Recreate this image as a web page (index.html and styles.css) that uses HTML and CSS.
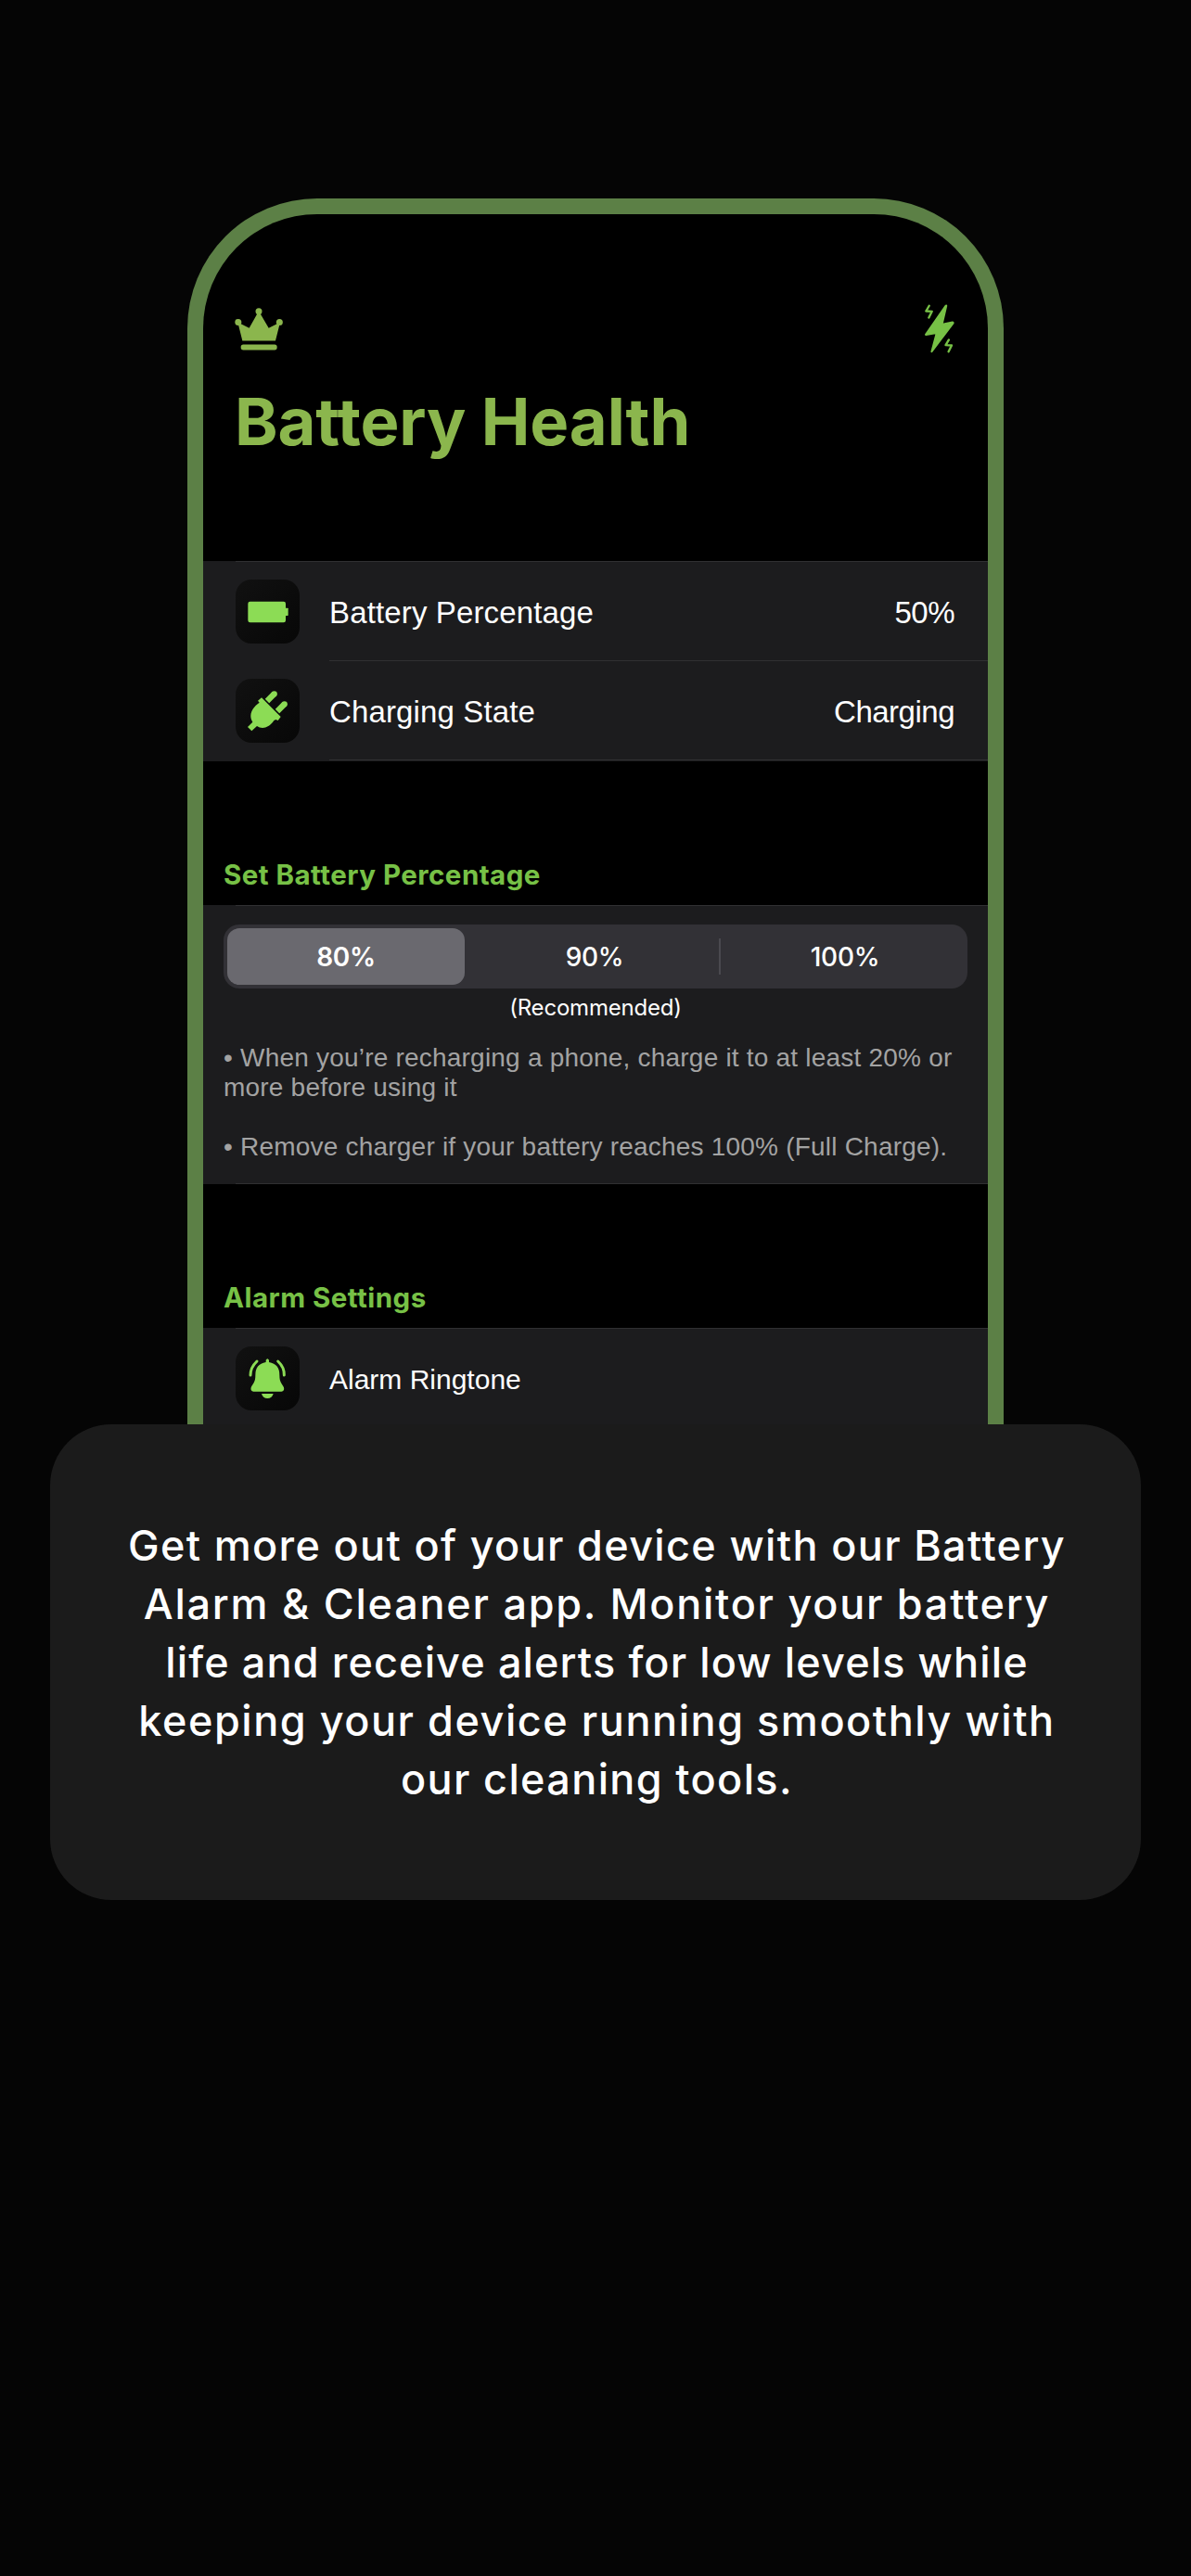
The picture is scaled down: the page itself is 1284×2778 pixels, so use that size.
FILE: index.html
```html
<!DOCTYPE html>
<html lang="en">
<head>
<meta charset="utf-8">
<title>Battery Alarm &amp; Cleaner</title>
<link rel="stylesheet" href="styles.css">
</head>
<body>
<main class="page">
  <section class="phone">
    <header class="topbar">
      <svg class="crown" viewBox="190 395 156 137" aria-hidden="true">
        <circle cx="268" cy="406" r="10.500"/><circle cx="201.500" cy="441" r="10.500"/><circle cx="335" cy="441" r="10.500"/>
        <path d="M264 412h8l28 48 30-15 5 4-13 52H215l-13-52 5-4 30 15z"/>
        <rect x="210" y="513" width="117" height="18" rx="8"/>
      </svg>
      <svg class="bolt" viewBox="1070 385 98 157" aria-hidden="true">
        <path class="solid" d="M1140 390l-64 92q0 1 1 1l34-6-16 60 69-92q0-2-2-2l-34 7 14-60q0-2-2 0z"/>
        <path class="spark" d="M1087 390l-10 17 19 1-10 20M1150 499l-10 17 19 1-10 20"/>
      </svg>
    </header>
    <h1 class="title">Battery Health</h1>

    <div class="group status">
      <div class="line line-wide"></div>
      <div class="row">
        <svg class="tile" viewBox="161 102 207 207" aria-hidden="true">
          <rect x="201" y="173" width="122" height="68" rx="7"/><rect x="318" y="194" width="13" height="25" rx="2"/>
        </svg>
        <span class="label">Battery Percentage</span>
        <span class="value">50%</span>
      </div>
      <div class="line"></div>
      <div class="row">
        <svg class="tile" viewBox="161 426 207 207" aria-hidden="true">
          <path d="M245 487L307 549L298 561L291 558L285 561C268 586 246 590 230 579L213 595L200 582L216 566C203 545 211 522 238 503L233 497Z"/>
          <path class="prong" d="M263 498l23-23M296 531l23-23"/>
          <circle cx="286" cy="475" r="9.500"/><circle cx="319" cy="508" r="9.500"/>
        </svg>
        <span class="label">Charging State</span>
        <span class="value">Charging</span>
      </div>
      <div class="line"></div>
    </div>

    <h2 class="heading">Set Battery Percentage</h2>
    <div class="group">
      <div class="line line-wide"></div>
      <div class="panel">
        <div class="segments">
          <span class="segment selected">80%</span>
          <span class="segment">90%</span>
          <span class="divider"></span>
          <span class="segment last">100%</span>
        </div>
        <p class="hint">(Recommended)</p>
        <p class="note">• When you’re recharging a phone, charge it to at least 20% or<br>more before using it</p>
        <p class="note">• Remove charger if your battery reaches 100% (Full Charge).</p>
      </div>
      <div class="line line-wide"></div>
    </div>

    <h2 class="heading">Alarm Settings</h2>
    <div class="group">
      <div class="line line-wide"></div>
      <div class="row">
        <svg class="tile" viewBox="191 245 207 207" aria-hidden="true">
          <path d="M289 296v-7q5-9 10 0v7q35 6 34 43c0 23 8 26 14 39q3 12-8 13h-90q-11-1-8-13c6-13 14-16 14-39q-1-37 34-43z"/>
          <path d="M275 398h38q-4 15-19 15t-19-15z"/>
          <path class="ring" d="M260 293q-21 20-21 45M328 293q21 20 20 45"/>
        </svg>
        <span class="label small">Alarm Ringtone</span>
      </div>
    </div>
  </section>

  <section class="caption">
    <p><span class="line-1">Get more out of your device with our Battery</span><br><span class="line-2">Alarm &amp; Cleaner app. Monitor your battery</span><br><span class="line-3">life and receive alerts for low levels while</span><br><span class="line-4">keeping your device running smoothly with</span><br><span class="line-5">our cleaning tools.</span></p>
  </section>
</main>
</body>
</html>
```
FILE: styles.css
```css
* { box-sizing: border-box; }

body {
  margin: 0;
  background: #050505;
  color: #fff;
  font-family: Inter, sans-serif;
}

.page {
  display: flex;
  flex-direction: column;
  align-items: center;
  min-height: 2778px;
  padding-top: 214px;
}

/* Phone frame, running down behind the caption */
.phone {
  width: 880px;
  height: 1322px;
  overflow: hidden;
  border: 17px solid #5c8046;
  border-bottom: 0;
  border-radius: 140px 140px 0 0;
  background: #000;
}

.topbar {
  display: flex;
  justify-content: space-between;
  align-items: center;
  height: 53px;
  margin: 97px 36px 0 34px;
}
.crown { width: 52px; height: 46px; fill: #8bb64d; }
.bolt { width: 33px; height: 53px; }
.bolt .solid { fill: #77c146; stroke: #77c146; stroke-width: 6; stroke-linejoin: round; }
.bolt .spark { fill: none; stroke: #77c146; stroke-width: 7; stroke-linecap: round; stroke-linejoin: round; }

.title {
  margin: 29px 0 105px 34px;
  color: #8bb64d;
  font-size: 70.5px;
  font-weight: 700;
  letter-spacing: -0.15px;
  line-height: 90px;
}

.group { background: #1c1c1e; }
.status { padding-bottom: 1px; }
.line { height: 1px; margin-left: 136px; background: #303032; }
.line-wide { margin-left: 35px; }

.row {
  display: flex;
  align-items: center;
  height: 106px;
  padding: 0 36px 0 35px;
}
.tile {
  width: 69px;
  height: 69px;
  border-radius: 17px;
  background: linear-gradient(135deg, #111, #070707);
  fill: #8cdc55;
}
.tile .prong { fill: none; stroke: #8cdc55; stroke-width: 19; }
.tile .ring { fill: none; stroke: #8cdc55; stroke-width: 9; stroke-linecap: round; }
.label, .value {
  padding-top: 3px;
  font-family: "Liberation Sans", Arial, sans-serif;
  font-size: 33px;
  line-height: 40px;
}
.label { flex: 1; margin-left: 32px; letter-spacing: 0.14px; }
.label.small { font-size: 30px; letter-spacing: 0; }
.value { letter-spacing: -0.5px; }

.heading {
  margin: 0;
  padding: 102px 0 13px 22px;
  color: #77c146;
  font-size: 29.5px;
  font-weight: 700;
  letter-spacing: 0.46px;
  line-height: 40px;
}

.panel { padding: 20px 22px 23px; }
.segments {
  display: flex;
  align-items: center;
  height: 69px;
  padding: 4px;
  border-radius: 17px;
  background: #323136;
}
.segment {
  width: 256px;
  height: 61px;
  padding-top: 1px;
  font-size: 28px;
  font-weight: 500;
  letter-spacing: -0.3px;
  line-height: 61px;
  text-align: center;
}
.segment + .segment { margin-left: 12px; }
.segment.last { margin-left: 6px; }
.selected { border-radius: 13px; background: #6a696f; font-weight: 600; }
.divider { width: 2px; height: 39px; margin-left: 6px; background: #4a494f; }

.hint {
  margin: 6px 0 23px;
  font-size: 24px;
  letter-spacing: -0.2px;
  line-height: 30px;
  text-align: center;
}
.note {
  margin: 0;
  color: #a3a3a3;
  font-family: "Liberation Sans", Arial, sans-serif;
  font-size: 28px;
  letter-spacing: 0.21px;
  line-height: 32px;
  white-space: nowrap;
}
.note + .note { margin-top: 32px; }

.caption {
  width: 1176px;
  height: 513px;
  padding: 99px 0 0 3px;
  border-radius: 66px;
  background: #1b1b1b;
  text-align: center;
}
.caption p {
  margin: 0;
  font-size: 45px;
  font-weight: 500;
  line-height: 63px;
  white-space: nowrap;
}
.line-1 { letter-spacing: 1.34px; }
.line-2 { letter-spacing: 1.74px; }
.line-3 { letter-spacing: 1.12px; }
.line-4 { letter-spacing: 1.54px; }
.line-5 { letter-spacing: 1.35px; }
```
